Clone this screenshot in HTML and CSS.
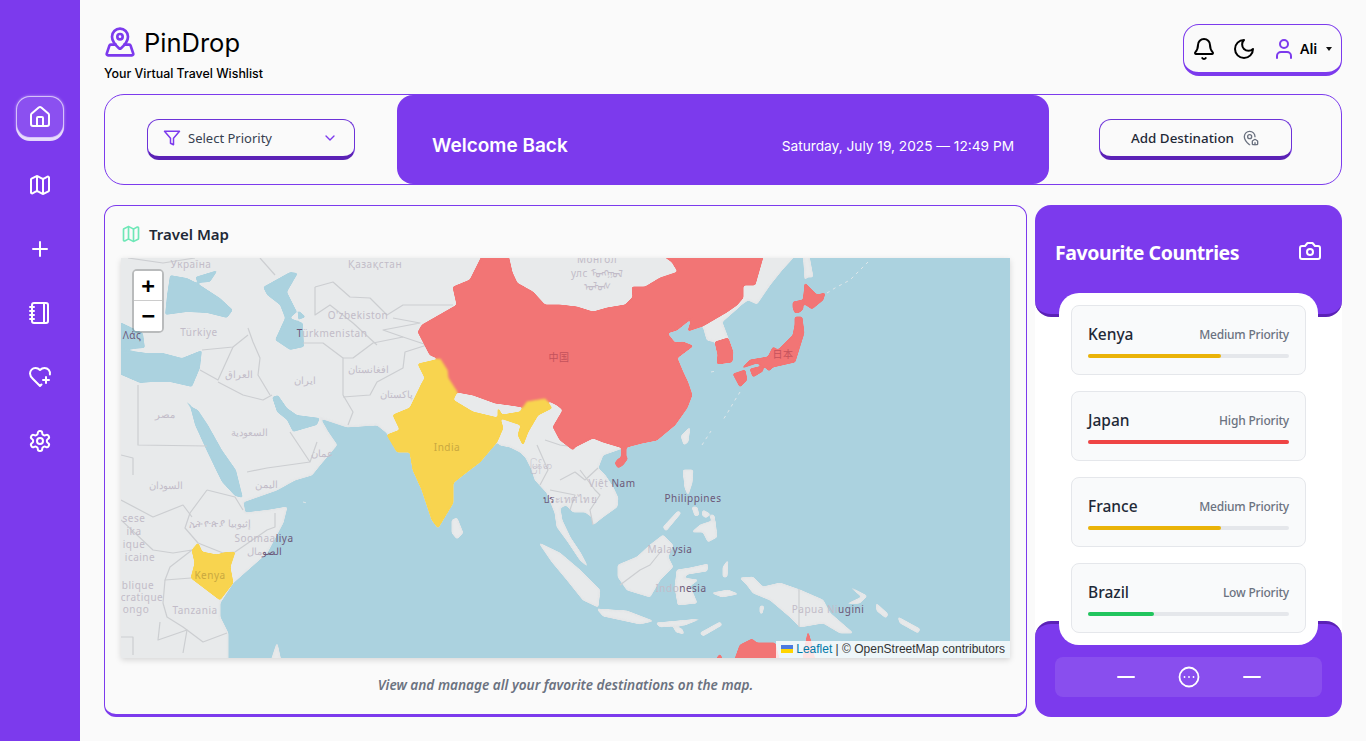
FILE: index.html
```html
<!DOCTYPE html>
<html lang="en">
<head>
  <meta charset="UTF-8" />
  <title>PinDrop</title>
  <link rel="stylesheet" href="styles.css">
</head>
<body>
  <!-- Sidebar -->
  <nav class="sidebar">
    <a class="nav-item active"><svg class="icon" viewBox="0 0 24 24"><path d="M15 21v-8a1 1 0 0 0-1-1h-4a1 1 0 0 0-1 1v8"/><path d="M3 10a2 2 0 0 1 .709-1.528l7-5.999a2 2 0 0 1 2.582 0l7 5.999A2 2 0 0 1 21 10v9a2 2 0 0 1-2 2H5a2 2 0 0 1-2-2z"/></svg></a>
    <a class="nav-item"><svg class="icon" viewBox="0 0 24 24"><path d="M14.106 5.553a2 2 0 0 0 1.788 0l3.659-1.83A1 1 0 0 1 21 4.619v12.764a1 1 0 0 1-.553.894l-4.553 2.277a2 2 0 0 1-1.788 0l-4.212-2.106a2 2 0 0 0-1.788 0l-3.659 1.83A1 1 0 0 1 3 19.381V6.618a1 1 0 0 1 .553-.894l4.553-2.277a2 2 0 0 1 1.788 0z"/><path d="M15 5.764v15"/><path d="M9 3.236v15"/></svg></a>
    <a class="nav-item"><svg class="icon" viewBox="0 0 24 24"><path d="M5 12h14"/><path d="M12 5v14"/></svg></a>
    <a class="nav-item"><svg class="icon" viewBox="0 0 24 24"><path d="M2 6h4"/><path d="M2 10h4"/><path d="M2 14h4"/><path d="M2 18h4"/><rect width="16" height="20" x="4" y="2" rx="2"/><path d="M16 2v20"/></svg></a>
    <a class="nav-item"><svg class="icon" viewBox="0 0 24 24"><path d="M13.5 19.5 12 21l-7-7c-1.5-1.45-3-3.2-3-5.5A5.5 5.5 0 0 1 7.5 3c1.76 0 3 .5 4.5 2 1.5-1.5 2.74-2 4.5-2a5.5 5.5 0 0 1 5.402 6.5"/><path d="M15 15h6"/><path d="M18 12v6"/></svg></a>
    <a class="nav-item"><svg class="icon" viewBox="0 0 24 24"><path d="M12.22 2h-.44a2 2 0 0 0-2 2v.18a2 2 0 0 1-1 1.73l-.43.25a2 2 0 0 1-2 0l-.15-.08a2 2 0 0 0-2.73.73l-.22.38a2 2 0 0 0 .73 2.73l.15.1a2 2 0 0 1 1 1.72v.51a2 2 0 0 1-1 1.74l-.15.09a2 2 0 0 0-.73 2.73l.22.38a2 2 0 0 0 2.73.73l.15-.08a2 2 0 0 1 2 0l.43.25a2 2 0 0 1 1 1.73V20a2 2 0 0 0 2 2h.44a2 2 0 0 0 2-2v-.18a2 2 0 0 1 1-1.73l.43-.25a2 2 0 0 1 2 0l.15.08a2 2 0 0 0 2.73-.73l.22-.39a2 2 0 0 0-.73-2.73l-.15-.08a2 2 0 0 1-1-1.74v-.5a2 2 0 0 1 1-1.74l.15-.09a2 2 0 0 0 .73-2.73l-.22-.38a2 2 0 0 0-2.73-.73l-.15.08a2 2 0 0 1-2 0l-.43-.25a2 2 0 0 1-1-1.73V4a2 2 0 0 0-2-2z"/><circle cx="12" cy="12" r="3"/></svg></a>
  </nav>

  <main class="main">
    <!-- Header -->
    <header class="topbar">
      <div class="brand">
        <div class="brand-row">
          <svg class="icon logo-icon" viewBox="0 0 24 24"><path d="M18 8c0 3.613-3.869 7.429-5.393 8.795a1 1 0 0 1-1.214 0C9.87 15.429 6 11.613 6 8a6 6 0 0 1 12 0"/><circle cx="12" cy="8" r="2"/><path d="M8.714 14h-3.71a1 1 0 0 0-.948.683l-2.004 6A1 1 0 0 0 3 22h18a1 1 0 0 0 .948-1.316l-2-6a1 1 0 0 0-.949-.684h-3.712"/></svg>
          <span class="brand-name">PinDrop</span>
        </div>
        <div class="tagline">Your Virtual Travel Wishlist</div>
      </div>
      <div class="user-box">
        <svg class="icon dark" viewBox="0 0 24 24"><path d="M10.268 21a2 2 0 0 0 3.464 0"/><path d="M3.262 15.326A1 1 0 0 0 4 17h16a1 1 0 0 0 .74-1.673C19.41 13.956 18 12.499 18 8A6 6 0 0 0 6 8c0 4.499-1.411 5.956-2.738 7.326"/></svg>
        <svg class="icon dark" viewBox="0 0 24 24"><path d="M12 3a6 6 0 0 0 9 9 9 9 0 1 1-9-9Z"/></svg>
        <div class="user">
          <svg class="icon purple" viewBox="0 0 24 24"><path d="M19 21v-2a4 4 0 0 0-4-4H9a4 4 0 0 0-4 4v2"/><circle cx="12" cy="7" r="4"/></svg>
          <span class="user-name">Ali</span>
          <span class="caret"></span>
        </div>
      </div>
    </header>

    <!-- Hero strip -->
    <section class="hero">
      <div class="hero-side hero-left">
        <button class="btn select-btn">
          <svg class="icon purple small" viewBox="0 0 24 24"><polygon points="22 3 2 3 10 12.46 10 19 14 21 14 12.46 22 3"/></svg>
          <span>Select Priority</span>
          <svg class="icon purple chevron" viewBox="0 0 24 24"><path d="m6 9 6 6 6-6"/></svg>
        </button>
      </div>
      <div class="hero-mid">
        <span class="welcome">Welcome Back</span>
        <span class="date">Saturday, July 19, 2025 — 12:49 PM</span>
      </div>
      <div class="hero-side hero-right">
        <button class="btn add-btn">
          <span>Add Destination</span>
          <svg class="icon grey pin-house" viewBox="0 0 24 24"><path d="M15 22a1 1 0 0 1-1-1v-4a1 1 0 0 1 .445-.832l3-2a1 1 0 0 1 1.11 0l3 2A1 1 0 0 1 22 17v4a1 1 0 0 1-1 1z"/><path d="M18 10a8 8 0 0 0-16 0c0 4.993 5.539 10.193 7.399 11.799a1 1 0 0 0 .601.2"/><path d="M18 22v-3"/><circle cx="10" cy="10" r="3"/></svg>
        </button>
      </div>
    </section>

    <div class="content">
      <!-- Map card -->
      <section class="map-card">
        <h2 class="card-title">
          <svg class="icon mint" viewBox="0 0 24 24"><path d="M14.106 5.553a2 2 0 0 0 1.788 0l3.659-1.83A1 1 0 0 1 21 4.619v12.764a1 1 0 0 1-.553.894l-4.553 2.277a2 2 0 0 1-1.788 0l-4.212-2.106a2 2 0 0 0-1.788 0l-3.659 1.83A1 1 0 0 1 3 19.381V6.618a1 1 0 0 1 .553-.894l4.553-2.277a2 2 0 0 1 1.788 0z"/><path d="M15 5.764v15"/><path d="M9 3.236v15"/></svg>
          Travel Map
        </h2>
        <div class="map">
          <!-- viewBox uses page coordinates so shapes are easy to compare with the screenshot -->
          <svg class="map-svg" viewBox="121 258 889 400">
            <defs>
              <!-- rounds off the polygon corners so coasts look less angular -->
              <filter id="soften" x="-2%" y="-2%" width="104%" height="104%" color-interpolation-filters="sRGB">
                <feGaussianBlur stdDeviation="1"/>
                <feComponentTransfer><feFuncA type="linear" slope="5" intercept="-2"/></feComponentTransfer>
              </filter>
            </defs>
            <rect class="sea" x="121" y="258" width="889" height="400"/>
            <g class="tiles">
            <g class="land soft">
              <polygon points="110,250 793,250 793,258 782,270 770,285 757,304 748,300 741,305 738,308 722,322 728,338 733,352 732,362 717,364 718,355 715,342 707,340 703,326 688,331 692,318 677,330 667,333 675,343 683,342 693,346 677,358 682,370 688,383 692,395 687,408 675,425 657,440 642,443 623,448 603,455 598,468 605,475 613,487 618,498 617,507 603,517 593,525 592,517 585,512 573,512 566,505 560,508 562,520 570,537 580,552 588,567 580,560 568,542 557,527 555,513 547,493 535,480 532,470 526,458 520,452 510,447 500,445 497,442 480,462 463,475 453,483 453,503 438,528 432,520 422,490 413,470 410,452 397,452 387,433 377,425 347,427 320,418 328,432 337,445 320,465 312,475 295,480 277,490 243,502 245,513 270,510 287,507 283,523 267,553 233,583 220,603 220,617 228,633 228,670 110,670"/>
              <polygon points="268,670 277,643 283,670"/>
              <polygon points="452,520 457,518 463,533 457,539 452,533"/>
              <polygon points="803,250 808,250 813,277 807,277 805,280"/>
              <polygon points="681,436 690,427 688,442 684,445"/>
              <polygon points="539,543 560,553 580,570 600,590 598,607 583,600 567,580 552,562"/>
              <polygon points="618,565 637,557 650,545 663,535 673,545 668,557 673,567 660,580 650,597 627,590 618,577"/>
              <polygon points="677,570 690,568 708,564 707,571 688,574 683,578 698,580 690,586 697,603 678,605 675,587"/>
              <polygon points="597,609 627,611 653,621 640,624 603,616"/>
              <polygon points="656,623 700,619 685,625 660,627"/>
              <polygon points="700,633 720,622 722,625 703,636"/>
              <polygon points="673,626 682,629 684,634 676,632"/>
              <polygon points="683,470 693,470 692,483 688,495 685,488"/>
              <polygon points="692,532 700,525 715,520 717,537 708,542 703,532"/>
              <polygon points="692,507 697,507 699,515 695,516"/>
              <polygon points="703,510 710,514 706,518 702,515"/>
              <polygon points="712,514 715,517 713,521 710,518"/>
              <polygon points="663,527 678,511 681,513 666,531"/>
              <polygon points="723,567 728,560 727,577 723,577"/>
              <polygon points="740,578 753,577 763,587 780,583 800,590 823,600 830,613 853,633 840,633 823,623 800,627 790,617 770,600 753,593 747,585"/>
              <polygon points="850,587 867,596 860,603 847,604 862,597"/>
              <polygon points="876,603 888,614 886,618 877,611"/>
              <polygon points="898,617 920,629 918,633 900,623"/>
              <polygon points="712,593 728,590 738,594 722,597"/>
              <polygon points="760,606 764,606 762,614 760,613"/>
            </g>
            <g class="dots">
              <polyline points="827,293 835,288 850,280 858,272 868,262"/>
              <polyline points="740,392 735,400 728,412 723,420"/>
              <polyline points="711,372 716,371"/>
              <polyline points="702,445 711,431"/>
              <polyline points="303,502 307,503"/>
            </g>
            <g class="sea-inland soft">
              <polygon points="165,315 167,295 170,275 187,278 197,283 220,298 233,310 227,318 207,313 187,312"/>
              <polygon points="195,277 218,270 210,282 198,283"/>
              <polygon points="263,287 290,272 298,273 287,292 297,312 290,318 303,323 304,347 290,350 275,340 285,318 280,305 267,295"/>
              <polygon points="298,310 306,317 298,320"/>
              <polygon points="110,348 147,353 163,353 182,358 202,350 200,368 192,387 170,382 153,382 140,383 110,370"/>
              <polygon points="120,322 143,333 145,348 120,350"/>
              <polygon points="190,406 198,410 208,425 222,450 236,470 243,498 235,496 222,482 215,468 205,447 195,425"/>
              <polygon points="182,397 191,405 193,411"/>
              <polygon points="272,397 278,395 287,408 297,415 320,418 317,425 293,432 287,420 277,412"/>
            </g>
            <g class="borders">
              <polyline points="248,328 253,342 260,358 258,375 270,395"/>
              <polyline points="202,350 233,347 248,335"/>
              <polyline points="233,347 218,380 200,370"/>
              <polyline points="218,382 243,395 263,400 272,395"/>
              <polyline points="138,385 138,445 207,446"/>
              <polyline points="121,455 133,458 133,475"/>
              <polyline points="303,343 323,343 343,358 343,395 353,412 348,425"/>
              <polyline points="343,397 370,395 377,382 403,368 405,352 427,345"/>
              <polyline points="343,358 353,358 373,343 403,337 427,345"/>
              <polyline points="315,287 315,315 330,305 353,323 377,345"/>
              <polyline points="315,287 333,282 350,297 370,298 387,315 403,305 453,305"/>
              <polyline points="393,318 420,323 383,330 403,337"/>
              <polyline points="260,258 275,275"/>
              <polyline points="128,258 163,263 195,258"/>
              <polyline points="290,432 310,462"/>
              <polyline points="247,472 267,468 310,462 317,442"/>
              <polyline points="207,490 190,513 185,528 198,543 223,553 235,552 267,530 275,527 275,513"/>
              <polyline points="207,490 235,497 243,510"/>
              <polyline points="121,500 153,517 183,505 192,517"/>
              <polyline points="173,553 192,550 170,567 165,580 191,578"/>
              <polyline points="121,520 153,550 173,553"/>
              <polyline points="165,580 163,603 167,617 183,627 203,642 227,633"/>
              <polyline points="160,622 158,640 187,630 183,653"/>
              <polyline points="121,637 133,637 133,655"/>
              <polyline points="580,470 595,490 600,495 590,510 593,525"/>
              <polyline points="560,480 575,472 585,480 598,468"/>
              <polyline points="550,490 575,495 570,510"/>
              <polyline points="537,445 548,470 540,485"/>
              <polyline points="620,585 640,570 650,565 662,550"/>
              <polyline points="799,589 799,627"/>
              <polyline points="545,440 560,445 575,447"/>
            </g>
            <g class="countries soft">
              <polygon class="red" points="485,250 507,250 512,272 517,283 533,292 545,305 560,305 577,307 593,312 607,308 625,305 633,297 632,287 645,287 660,278 678,272 672,262 655,250 765,250 755,285 743,285 743,298 737,305 727,312 703,326 688,331 692,318 677,330 667,333 675,343 683,342 693,346 677,358 682,370 688,383 692,395 687,408 675,425 657,440 642,443 623,448 603,442 593,438 575,447 573,450 560,440 553,427 563,410 557,405 545,399 533,403 523,407 510,405 495,403 473,395 457,392 447,378 445,368 440,359 430,355 418,332 422,325 457,305 453,287 470,280"/>
              <polygon class="red" points="615,463 618,459 621,458 622,447 626,447 626,458 628,458 623,465 618,468"/>
              <polygon class="red" points="715,342 728,338 733,352 732,362 717,364 718,355"/>
              <polygon class="red" points="805,283 817,295 825,293 823,300 812,309 803,303"/>
              <polygon class="red" points="793,302 803,300 803,309 800,312 795,313 793,308"/>
              <polygon class="red" points="795,317 802,317 804,333 795,362 773,367 769,371 765,367 757,363 742,368 750,360 768,357 773,347 778,350 793,335 795,325"/>
              <polygon class="red" points="733,374 745,370 747,380 740,387"/>
              <polygon class="red" points="750,369 763,366 763,371 753,377"/>
              <polygon class="red" points="708,670 720,654 727,670"/>
              <polygon class="red" points="731,670 740,645 752,639 757,643 775,643 782,670"/>
              <polygon class="red" points="801,670 806,642 808,632 811,642 817,670"/>
              <polygon class="yellow" points="418,364 440,359 447,370 448,378 457,392 453,400 473,412 498,418 498,408 502,415 520,412 527,402 545,399 552,408 538,415 528,432 523,445 518,435 521,425 500,418 503,428 497,442 480,462 463,475 453,483 453,503 438,528 432,520 422,490 413,470 410,452 397,452 387,435 400,430 393,415 410,408 422,383 425,378"/>
              <polygon class="yellow" points="192,550 198,543 202,552 217,555 223,553 235,552 230,567 233,583 220,600 191,578 195,563"/>
            </g>
            </g>
            <g class="labels">
              <text x="191" y="268">Україна</text>
              <text x="375" y="268">Қазақстан</text>
              <text x="358" y="319">O'zbekiston</text>
              <text x="332" y="337"><tspan class="dk">T</tspan>ürkmenistan</text>
              <text x="199" y="336">Türkiye</text>
              <text x="132" y="339" class="dk">Λάς</text>
              <text x="165" y="418">مصر</text>
              <text x="239" y="378">العراق</text>
              <text x="305" y="384">ایران</text>
              <text x="368" y="373">افغانستان</text>
              <text x="396" y="398">پاکستان</text>
              <text x="249" y="436">السعودية</text>
              <text x="322" y="457">عمان</text>
              <text x="447" y="451" class="on-yellow">India</text>
              <text x="559" y="361" class="on-red">中国</text>
              <text x="783" y="358" class="on-red">日本</text>
              <text x="166" y="489">السودان</text>
              <text x="266" y="488">اليمن</text>
              <text x="220" y="527">ኢትዮጵያ إثيوبيا</text>
              <text x="264" y="542">Soomaa<tspan class="dk">liya</tspan></text>
              <text x="264" y="555"><tspan class="dk">الصو</tspan>مال</text>
              <text x="210" y="579" class="on-yellow">Kenya</text>
              <text x="195" y="614">Tanzania</text>
              <text x="138" y="589">blique</text>
              <text x="142" y="601">cratique</text>
              <text x="136" y="613">ongo</text>
              <text x="134" y="522">sese</text>
              <text x="134" y="535">ika</text>
              <text x="134" y="548">ique</text>
              <text x="140" y="561">icaine</text>
              <text x="612" y="487">Việt <tspan class="dk">Nam</tspan></text>
              <text x="693" y="502" class="dk">Philippines</text>
              <text x="670" y="553">Mala<tspan class="dk">ysia</tspan></text>
              <text x="681" y="592">Indo<tspan class="dk">nesia</tspan></text>
              <text x="828" y="613">Papua Ni<tspan class="dk">ugini</tspan></text>
              <text x="570" y="503"><tspan class="dk">ปร</tspan>ะเทศไทย</text>
              <text x="541" y="469">မြန်မာ</text>
              <text x="597" y="263">Монгол</text>
              <text x="597" y="277">улс ᠮᠣᠩᠭᠣᠯ</text>
              <text x="597" y="290">ᠤᠯᠤᠰ</text>
            </g>
          </svg>

          <div class="zoom-ctl">
            <a class="zoom-btn">+</a>
            <a class="zoom-btn">−</a>
          </div>
          <div class="attribution"><span class="flag"></span> <a class="leaflet-link">Leaflet</a> | © OpenStreetMap contributors</div>
        </div>
        <p class="caption">View and manage all your favorite destinations on the map.</p>
      </section>

      <!-- Favourites -->
      <aside class="fav-panel">
        <div class="fav-head">
          <h2>Favourite Countries</h2>
          <svg class="icon white" viewBox="0 0 24 24"><path d="M14.5 4h-5L7 7H4a2 2 0 0 0-2 2v9a2 2 0 0 0 2 2h16a2 2 0 0 0 2-2V9a2 2 0 0 0-2-2h-3l-2.5-3z"/><circle cx="12" cy="13" r="3"/></svg>
        </div>
        <div class="fav-list">
          <div class="fav-item">
            <div class="fav-row"><span class="fav-name">Kenya</span><span class="fav-pri">Medium Priority</span></div>
            <div class="bar"><div class="bar-fill medium" style="width:66%"></div></div>
          </div>
          <div class="fav-item">
            <div class="fav-row"><span class="fav-name">Japan</span><span class="fav-pri">High Priority</span></div>
            <div class="bar"><div class="bar-fill high" style="width:100%"></div></div>
          </div>
          <div class="fav-item">
            <div class="fav-row"><span class="fav-name">France</span><span class="fav-pri">Medium Priority</span></div>
            <div class="bar"><div class="bar-fill medium" style="width:66%"></div></div>
          </div>
          <div class="fav-item">
            <div class="fav-row"><span class="fav-name">Brazil</span><span class="fav-pri">Low Priority</span></div>
            <div class="bar"><div class="bar-fill low" style="width:33%"></div></div>
          </div>
        </div>
        <div class="fav-foot">
          <div class="foot-bar">
            <svg class="icon white" viewBox="0 0 24 24"><path d="M4 12h16"/></svg>
            <svg class="icon white thin" viewBox="0 0 24 24"><circle cx="12" cy="12" r="9.5"/><path d="M16.5 12h.01"/><path d="M12 12h.01"/><path d="M7.5 12h.01"/></svg>
            <svg class="icon white" viewBox="0 0 24 24"><path d="M4 12h16"/></svg>
          </div>
        </div>
      </aside>
    </div>
  </main>
</body>
</html>
```

FILE: styles.css
```css
/* Reset and base */
* {
  box-sizing: border-box;
}
html, body {
  margin: 0;
  height: 100%;
  overflow: hidden;
}
body {
  display: flex;
  background: #fafafa;
  font-family: "Noto Sans", "Open Sans", sans-serif;
  color: #1f2937;
}

/* Icons */
.icon {
  width: 24px;
  height: 24px;
  flex: none;
  fill: none;
  stroke: currentColor;
  stroke-width: 2;
  stroke-linecap: round;
  stroke-linejoin: round;
}
.icon.small { width: 18px; height: 18px; }
.icon.pin-house { width: 16px; height: 16px; }
.icon.thin { stroke-width: 1.8; }
.icon.purple { color: #7c3aed; }
.icon.dark { color: #000; }
.icon.grey { color: #6b7280; }
.icon.white { color: #fff; }
.icon.mint { color: #6ee7b7; width: 20px; height: 20px; }

/* Sidebar */
.sidebar {
  width: 80px;
  flex: none;
  background: #7c3aed;
  display: flex;
  flex-direction: column;
  align-items: center;
  gap: 16px;
  padding-top: 96px;
}
.nav-item {
  width: 48px;
  height: 48px;
  display: flex;
  align-items: center;
  justify-content: center;
  color: #fff;
}
.nav-item.active {
  height: 42px;
  margin-bottom: 7px;
  background: #8b50f0;
  border: 1px solid rgba(255,255,255,0.65);
  border-radius: 14px;
  box-shadow: 0 3px 0 rgba(255,255,255,0.8), 0 0 3px rgba(255,255,255,0.5);
}

/* Main column */
.main {
  flex: 1;
  min-width: 0;
  height: 100vh;
  display: flex;
  flex-direction: column;
  padding: 24px;
}

/* Header */
.topbar {
  height: 70px;
  flex: none;
  display: flex;
  justify-content: space-between;
  align-items: flex-start;
}
.brand-row {
  display: flex;
  align-items: center;
  gap: 8px;
  height: 36px;
}
.logo-icon {
  width: 32px;
  height: 32px;
  color: #7c3aed;
}
.brand-name {
  font-family: Inter, sans-serif;
  font-size: 25.5px;
  color: #000;
}
.tagline {
  font-family: Inter, sans-serif;
  font-size: 12.4px;
  font-weight: 500;
  color: #000;
  margin-top: 6px;
}
.user-box {
  width: 159px;
  height: 52px;
  display: flex;
  align-items: center;
  gap: 16px;
  padding: 0 8px;
  background: #fafafa;
  border: 1px solid #7c3aed;
  border-bottom-width: 4px;
  border-radius: 16px;
}
.user {
  display: flex;
  align-items: center;
  gap: 4px;
}
.user-name {
  font-size: 14px;
  font-weight: 600;
  color: #000;
}
.caret {
  margin-left: 5px;
  border-left: 3px solid transparent;
  border-right: 3px solid transparent;
  border-top: 4px solid #111;
}

/* Hero */
.hero {
  height: 91px;
  flex: none;
  display: flex;
  border: 1px solid #7c3aed;
  border-radius: 20px;
  background: #fafafa;
  overflow: hidden;
}
.hero-side {
  display: flex;
  align-items: center;
  justify-content: center;
}
.hero-left { width: 292px; }
.hero-right { flex: 1; }
.hero-mid {
  width: 652px;
  display: flex;
  align-items: center;
  justify-content: space-between;
  padding: 12px 35px 0;
  background: #7c3aed;
  border-radius: 16px;
  color: #fff;
}
.welcome {
  font-family: Inter, sans-serif;
  font-size: 19px;
  font-weight: 600;
}
.date {
  font-family: Inter, sans-serif;
  font-size: 13.7px;
}
.btn {
  height: 41px;
  display: flex;
  align-items: center;
  background: #fafafa;
  border: 1px solid #6d32d8;
  border-bottom: 4px solid #5b21b6;
  border-radius: 12px;
  font-family: "Noto Sans", sans-serif;
  font-size: 13px;
  color: #374151;
}
.select-btn {
  width: 208px;
  gap: 7px;
  padding: 0 16px 0 15px;
}
.select-btn .chevron {
  width: 16px;
  height: 16px;
  margin-left: auto;
}
.add-btn {
  width: 193px;
  justify-content: center;
  gap: 9px;
  font-size: 13.4px;
  font-weight: 500;
  color: #1f2937;
}

/* Content row */
.content {
  flex: 1;
  min-height: 0;
  margin-top: 20px;
  display: flex;
  gap: 8px;
}
.map-card {
  width: 923px;
  flex: none;
  display: flex;
  flex-direction: column;
  padding: 16px;
  padding-bottom: 0;
  border: 1px solid #7c3aed;
  border-bottom-width: 3px;
  border-radius: 12px;
  background: #fafafa;
}
.card-title {
  height: 36px;
  margin: 0;
  padding-bottom: 12px;
  display: flex;
  align-items: center;
  gap: 8px;
  font-size: 15px;
  font-weight: 600;
  color: #1f2937;
}

/* Map */
.map {
  width: 889px;
  height: 400px;
  position: relative;
  overflow: hidden;
  box-shadow: 0 2px 6px rgba(0,0,0,0.15);
}
.map-svg {
  display: block;
  width: 889px;
  height: 400px;
}
.soft { filter: url(#soften); }
.sea, .sea-inland polygon { fill: #abd2df; }
.land polygon {
  fill: #e8eaeb;
  stroke: #e0e2e4;
  stroke-width: 1;
  stroke-linejoin: round;
}
.dots polyline {
  fill: none;
  stroke: #dfe6e9;
  stroke-width: 1;
  stroke-dasharray: 3 4;
}
.borders polyline {
  fill: none;
  stroke: #ccced1;
  stroke-width: 1.2;
  stroke-linejoin: round;
}
.countries polygon {
  stroke-width: 1;
  stroke-linejoin: round;
}
.countries .red { fill: #f27575; stroke: #f27575; }
.countries .yellow { fill: #f8d44f; stroke: #f8d44f; }
.labels text {
  font-family: "Noto Sans", "Noto Sans CJK SC", sans-serif;
  font-size: 10px;
  letter-spacing: 0.5px;
  fill: #c2bcc8;
  text-anchor: middle;
}
.labels .dk { fill: #6b5878; }
.labels .on-yellow { fill: #c9a83f; }
.labels .on-red { fill: #c4525c; }

.zoom-ctl {
  position: absolute;
  top: 11px;
  left: 11px;
  width: 32px;
  border: 2px solid rgba(0,0,0,0.2);
  border-radius: 5px;
  background-clip: padding-box;
}
.zoom-btn {
  display: block;
  height: 30px;
  line-height: 30px;
  text-align: center;
  background: #fff;
  color: #000;
  font: bold 22px/30px "DejaVu Sans Mono", "Liberation Mono", monospace;
}
.zoom-btn:first-child {
  border-bottom: 1px solid #ccc;
  border-radius: 2px 2px 0 0;
}
.zoom-btn:last-child {
  border-radius: 0 0 2px 2px;
}
.attribution {
  position: absolute;
  right: 0;
  bottom: 0;
  height: 17px;
  padding: 0 5px;
  background: rgba(255,255,255,0.8);
  font: 12px/17px "Liberation Sans", sans-serif;
  color: #333;
  white-space: nowrap;
}
.flag {
  display: inline-block;
  width: 12px;
  height: 8px;
  background: linear-gradient(#4c7be1 50%, #ffd500 50%);
}
.leaflet-link { color: #0078a8; }
.caption {
  margin: 17px 0 0;
  text-align: center;
  font-size: 13.6px;
  font-style: italic;
  font-weight: 600;
  color: #6b7280;
}

/* Favourites panel */
.fav-panel {
  flex: 1;
  display: flex;
  flex-direction: column;
  background: #fff;
  border-radius: 16px;
}
.fav-head {
  height: 112px;
  flex: none;
  display: flex;
  justify-content: space-between;
  align-items: flex-start;
  padding: 34px 20px 0;
  background: #7c3aed;
  border-bottom: 3px solid #5b21b6;
  border-radius: 16px;
  color: #fff;
}
.fav-head h2 {
  margin: 0;
  font-size: 19.5px;
  font-weight: 700;
  letter-spacing: -0.45px;
}
.fav-list {
  flex: none;
  position: relative;
  z-index: 1;
  margin: -24px 24px;
  padding: 12px;
  display: flex;
  flex-direction: column;
  gap: 16px;
  background: #fff;
  border-radius: 20px;
}
.fav-item {
  height: 70px;
  padding: 16px;
  background: #f9fafb;
  border: 1px solid #e5e7eb;
  border-radius: 8px;
}
.fav-row {
  display: flex;
  justify-content: space-between;
  align-items: center;
  height: 24px;
  margin-bottom: 8px;
}
.fav-name {
  font-size: 15.5px;
  font-weight: 500;
  color: #1f2937;
}
.fav-pri {
  font-size: 12px;
  font-weight: 500;
  letter-spacing: -0.2px;
  color: #6b7280;
}
.bar {
  height: 4px;
  background: #e5e7eb;
  border-radius: 2px;
}
.bar-fill {
  height: 100%;
  border-radius: 2px;
}
.bar-fill.medium { background: #eab308; }
.bar-fill.high { background: #ef4444; }
.bar-fill.low { background: #22c55e; }
.fav-foot {
  flex: 1;
  display: flex;
  align-items: flex-end;
  padding: 0 20px 20px;
  background: #7c3aed;
  border-top: 3px solid #5b21b6;
  border-radius: 16px;
}
.foot-bar {
  width: 100%;
  height: 40px;
  display: flex;
  align-items: center;
  justify-content: center;
  gap: 39px;
  background: rgba(255,255,255,0.1);
  border-radius: 8px;
}
```
